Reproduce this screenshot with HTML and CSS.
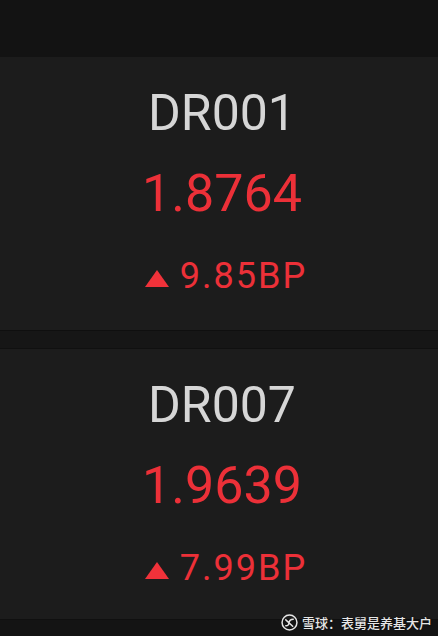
FILE: index.html
```html
<!DOCTYPE html>
<html lang="zh-CN">
<head>
  <meta charset="UTF-8">
  <title>DR 利率</title>
  <link rel="stylesheet" href="styles.css">
</head>
<body>

  <div class="topbar"></div>

  <div class="quote">
    <div class="code">DR001</div>
    <div class="price">1.8764</div>
    <div class="change"><span class="arrow"></span>9.85BP</div>
  </div>

  <div class="divider"></div>

  <div class="quote last">
    <div class="code">DR007</div>
    <div class="price">1.9639</div>
    <div class="change"><span class="arrow"></span>7.99BP</div>
  </div>

  <div class="watermark">
    <svg class="logo" width="17" height="17" viewBox="0 0 16 16">
      <circle cx="8" cy="8" r="7" fill="none" stroke="#e6e6e6" stroke-width="1.4"/>
      <path d="M4.5 5.5 L11 11.5 M11.5 5 Q8 5 7.5 8.5 Q7 11.5 4.5 11" fill="none" stroke="#e6e6e6" stroke-width="1.4" stroke-linecap="round"/>
    </svg>
    <span>雪球：表舅是养基大户</span>
  </div>

</body>
</html>
```

FILE: styles.css
```css
body {
  margin: 0;
  background-color: #141414;
  font-family: Roboto, "Noto Sans", "Noto Sans CJK SC", sans-serif;
  position: relative;
  height: 636px;
  overflow: hidden;
}
.topbar {
  height: 57px;
  background-color: #131313;
}
.quote {
  background-color: #1c1c1c;
  height: 273px;
  padding-top: 31px;
  padding-left: 6px;
  box-sizing: border-box;
  display: flex;
  flex-direction: column;
  align-items: center;
}
.quote.last {
  height: 271px;
  border-bottom: 1px solid #101010;
}
.code {
  font-size: 50px;
  line-height: 50px;
  color: #d6d6d6;
}
.price {
  margin-top: 30px;
  font-size: 52px;
  line-height: 52px;
  color: #ec3038;
}
.change {
  margin-top: 38px;
  margin-left: 8px;
  font-size: 36px;
  line-height: 36px;
  letter-spacing: 2px;
  color: #ec3038;
  display: flex;
  align-items: center;
}
.arrow {
  width: 0;
  height: 0;
  border-left: 12px solid transparent;
  border-right: 12px solid transparent;
  border-bottom: 17px solid #f0323a;
  margin-right: 11px;
  margin-top: 4px;
}
.divider {
  height: 17px;
  background-color: #161616;
  border-top: 1px solid #0f0f0f;
  border-bottom: 1px solid #101010;
}
.watermark {
  position: absolute;
  right: 6px;
  bottom: 4px;
  display: flex;
  align-items: center;
  gap: 4px;
  font-family: "Noto Sans CJK SC", sans-serif;
  font-size: 13px;
  font-weight: 500;
  color: #e6e6e6;
  text-shadow: 0 0 2px rgba(0, 0, 0, 0.6);
}
```
